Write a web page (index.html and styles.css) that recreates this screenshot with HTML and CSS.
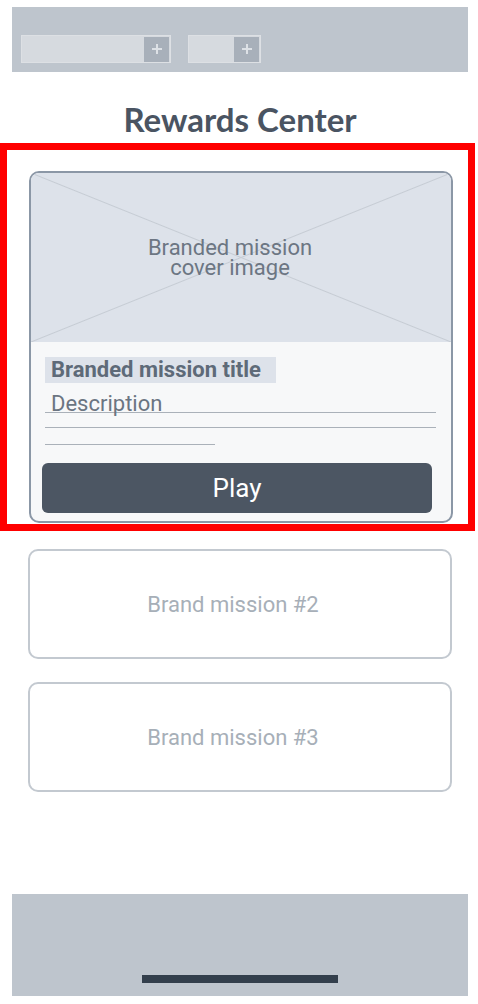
FILE: index.html
```html
<!DOCTYPE html>
<html>
<head>
  <title>Rewards Center</title>
  <link rel="stylesheet" href="styles.css">
</head>
<body>
  <div class="phone">
    <div class="top-bar">
      <div class="tab tab-wide">
        <span class="tab-plus"><svg width="12" height="12" viewBox="0 0 12 12"><path d="M6 1v10M1 6h10" stroke="#dde1e6" stroke-width="2"/></svg></span>
      </div>
      <div class="tab tab-short">
        <span class="tab-plus"><svg width="12" height="12" viewBox="0 0 12 12"><path d="M6 1v10M1 6h10" stroke="#dde1e6" stroke-width="2"/></svg></span>
      </div>
    </div>

    <h1 class="page-title">Rewards Center</h1>

    <div class="highlight">
      <div class="mission-card">
        <div class="cover">
          <span class="cover-text">Branded mission<br>cover image</span>
        </div>
        <div class="mission-body">
          <div class="mission-title">Branded mission title</div>
          <div class="mission-desc">Description</div>
          <div class="desc-line"></div>
          <div class="desc-line short"></div>
          <button class="play-btn">Play</button>
        </div>
      </div>
    </div>

    <div class="mission-stub">Brand mission #2</div>
    <div class="mission-stub">Brand mission #3</div>

    <div class="bottom-bar">
      <div class="home-indicator"></div>
    </div>
  </div>
</body>
</html>
```

FILE: styles.css
```css
body {
  margin: 0;
  padding: 0;
  background: #ffffff;
  font-family: Roboto, "Liberation Sans", sans-serif;
}

.phone {
  width: 456px;
  height: 989px;
  margin: 7px 0 0 12px;
  display: flex;
  flex-direction: column;
}

/* top bar with two tabs */
.top-bar {
  height: 65px;
  background: #bec5cd;
  display: flex;
  align-items: flex-end;
  gap: 17px;
  padding: 0 0 9px 9px;
  box-sizing: border-box;
}

.tab {
  height: 28px;
  background: #d6dadf;
  border: 1px solid #dde0e4;
  box-sizing: border-box;
  display: flex;
  justify-content: flex-end;
  align-items: center;
}

.tab-wide {
  width: 150px;
}

.tab-short {
  width: 73px;
}

.tab-plus {
  width: 25px;
  height: 25px;
  background: #a8b0ba;
  display: flex;
  align-items: center;
  justify-content: center;
  margin-right: 1px;
}

.page-title {
  margin: 28px 0 5px;
  font-family: Lato, "Liberation Sans", sans-serif;
  font-weight: 700;
  font-size: 33px;
  line-height: 38px;
  color: #4a5462;
  text-align: center;
}

/* red annotation frame around the first mission */
.highlight {
  margin-left: -12px;
  width: 475px;
  border: 7px solid #ff0000;
  box-sizing: border-box;
  padding: 21px 15px 1px 22px;
}

.mission-card {
  border: 2px solid #8b97a6;
  border-radius: 10px;
  overflow: hidden;
  background: #f7f8f9;
}

.cover {
  height: 169px;
  background:
    linear-gradient(to top right, transparent calc(50% - 1px), #c6ccd4, transparent calc(50% + 1px)),
    linear-gradient(to bottom right, transparent calc(50% - 1px), #c6ccd4, transparent calc(50% + 1px)),
    #dde2ea;
  display: flex;
  align-items: center;
  justify-content: center;
  padding: 0 22px 0 0;
  box-sizing: border-box;
}

.cover-text {
  font-size: 22px;
  line-height: 20px;
  color: #6c7683;
  text-align: center;
}

.mission-body {
  padding: 15px 0 8px;
}

.mission-title {
  display: inline-block;
  margin-left: 14px;
  padding: 0 15px 0 6px;
  background: #dde2ea;
  font-size: 22px;
  font-weight: 700;
  line-height: 26px;
  color: #5e6a78;
}

.mission-desc {
  margin: 13px 15px 0 14px;
  padding-left: 6px;
  font-size: 22px;
  line-height: 16px;
  color: #6b7582;
  border-bottom: 1px solid #aab1b9;
}

.desc-line {
  margin: 0 15px 0 14px;
  height: 14px;
  border-bottom: 1px solid #aab1b9;
}

.desc-line.short {
  width: 170px;
  height: 16px;
}

.play-btn {
  display: block;
  width: 390px;
  height: 50px;
  margin: 18px 0 0 11px;
  border: none;
  border-radius: 6px;
  background: #4c5663;
  color: #ffffff;
  font-family: Roboto, "Liberation Sans", sans-serif;
  font-size: 26px;
}

.mission-stub {
  margin: 18px 16px 0;
  height: 110px;
  border: 2px solid #c3c9d0;
  border-radius: 10px;
  box-sizing: border-box;
  display: flex;
  align-items: center;
  justify-content: center;
  padding-right: 14px;
  font-size: 22px;
  color: #a7afb8;
}

.mission-stub + .mission-stub {
  margin-top: 23px;
}

.bottom-bar {
  margin-top: auto;
  height: 102px;
  background: #bec5cd;
  display: flex;
  align-items: flex-end;
  justify-content: center;
  padding-bottom: 13px;
  box-sizing: border-box;
}

.home-indicator {
  width: 196px;
  height: 8px;
  background: #333f4c;
}
```
